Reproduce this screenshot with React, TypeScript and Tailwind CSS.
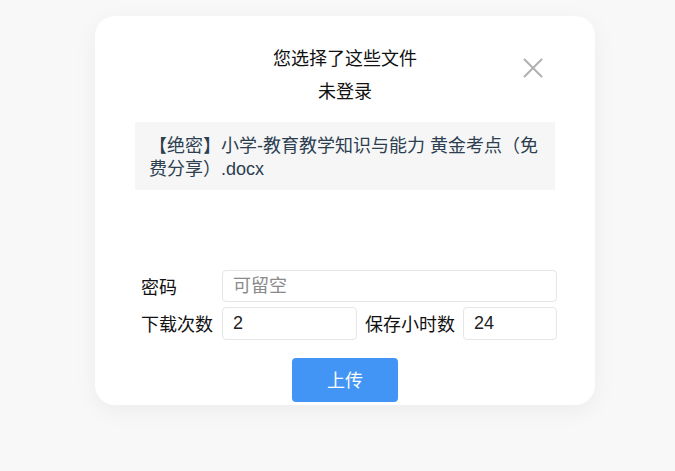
import React from "react";

export default function App() {
  const font = { fontFamily: '"Liberation Sans", "Noto Sans CJK SC", sans-serif' };
  return (
    <div className="min-h-screen bg-[#f8f8f8] pt-[16px] pl-[95px]" style={font}>
      <div className="relative w-[500px] h-[389px] rounded-[20px] bg-white shadow-[0_6px_24px_rgba(0,0,0,0.05)] flex flex-col">
        <button className="absolute left-[428px] top-[42px] w-[20px] h-[20px] text-[#b0b0b0]">
          <svg width="20" height="20" viewBox="0 0 20 20" fill="none" stroke="currentColor" strokeWidth="2">
            <path d="M1 1 L19 19 M19 1 L1 19" />
          </svg>
        </button>
        <div className="pt-[27px] text-center text-[18px] leading-[33px] text-[#111]">
          <div>您选择了这些文件</div>
          <div>未登录</div>
        </div>
        <div className="mt-[13px] mx-[40px] h-[68px] bg-[#f6f6f6] px-[14px] pt-[13px] pb-[9px] text-[18px] leading-[23px] text-[#2c3e50] whitespace-nowrap">
          <div>【绝密】小学-教育教学知识与能力 黄金考点（免</div>
          <div>费分享）.docx</div>
        </div>
        <div className="mt-[80px] pl-[46px] pr-[38px] text-[18px] text-[#111]">
          <div className="flex items-center h-[32px]">
            <span className="w-[81px] shrink-0 pt-[4px]">密码</span>
            <input
              className="flex-1 min-w-0 h-[32px] border border-[#e6e6e6] rounded-[4px] px-[10px] text-[18px] text-[#222] placeholder:text-[#8a8a8a] outline-none"
              placeholder="可留空"
              style={font}
            />
          </div>
          <div className="flex items-center h-[33px] mt-[5px]">
            <span className="w-[81px] shrink-0 whitespace-nowrap pt-[4px]">下载次数</span>
            <input
              className="w-[135px] min-w-0 shrink-0 h-[33px] border border-[#e6e6e6] rounded-[4px] px-[10px] text-[18px] text-[#222] outline-none"
              defaultValue="2"
              style={font}
            />
            <span className="ml-[8px] w-[98px] shrink-0 whitespace-nowrap pt-[4px]">保存小时数</span>
            <input
              className="flex-1 min-w-0 h-[33px] border border-[#e6e6e6] rounded-[4px] px-[10px] text-[18px] text-[#222] outline-none"
              defaultValue="24"
              style={font}
            />
          </div>
        </div>
        <div className="mt-[18px] flex justify-center">
          <button className="w-[106px] h-[44px] rounded-[4px] bg-[#4395f5] text-white text-[18px] pt-[3px]" style={font}>
            上传
          </button>
        </div>
      </div>
    </div>
  );
}
